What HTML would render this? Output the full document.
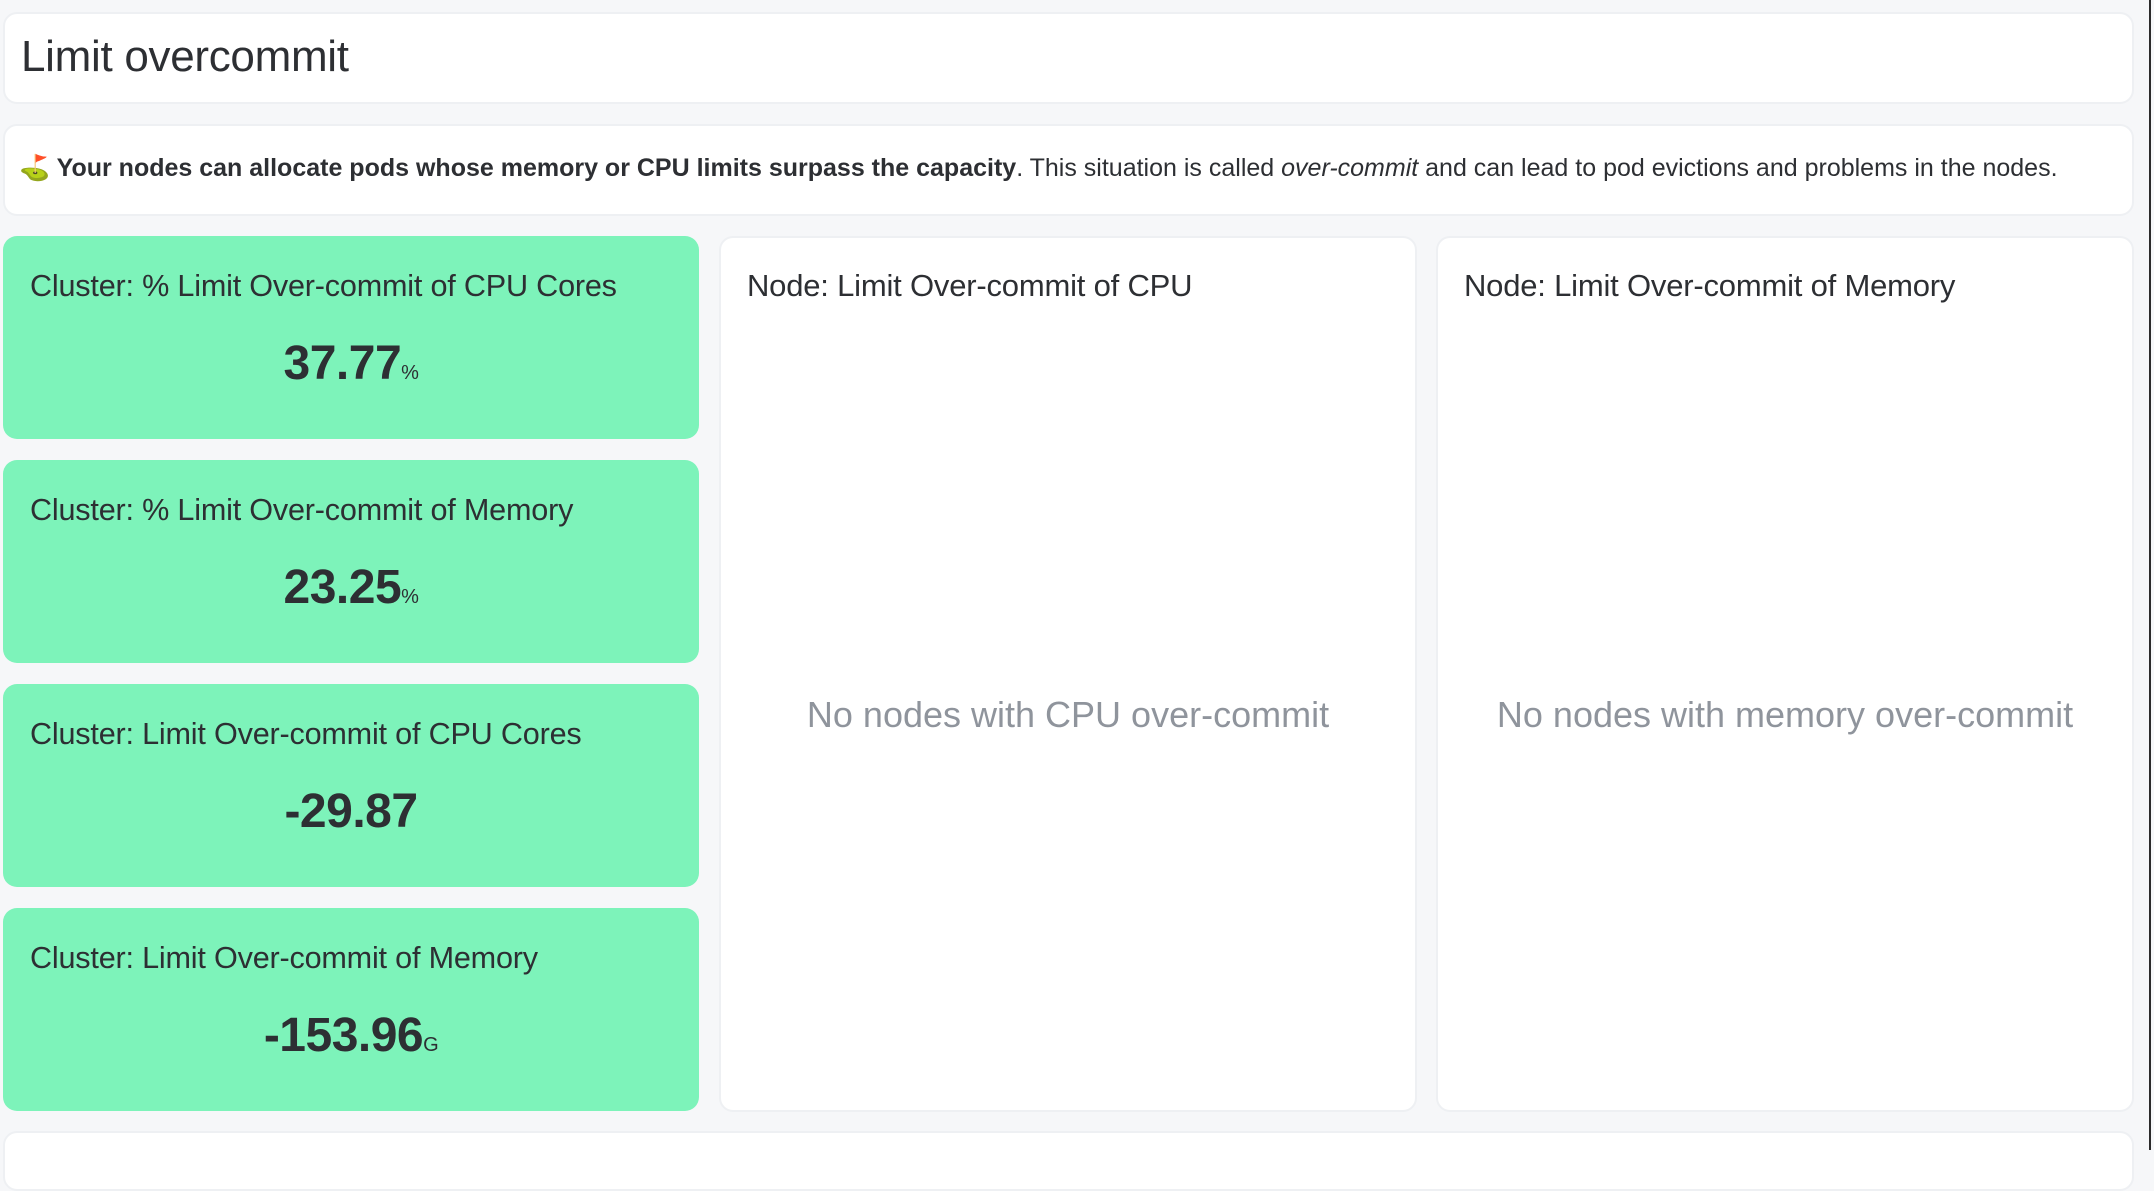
<!DOCTYPE html>
<html><head><meta charset="utf-8"><style>
body{margin:0;width:2154px;height:1150px;background:#f6f7f9;font-family:"Liberation Sans",sans-serif;color:#2d2f33;position:relative;overflow:hidden}
.box{position:absolute;background:#fff;border:2px solid #eef0f3;border-radius:14px;box-sizing:border-box}
.card{position:absolute;left:3px;width:696px;height:203px;background:#7df3ba;border-radius:14px}
.card .t{position:absolute;left:27px;top:33px;font-size:30.6px;white-space:nowrap;letter-spacing:-0.2px}
.card .v{position:absolute;left:0;right:0;top:100px;text-align:center;font-size:48px;font-weight:bold;letter-spacing:-0.5px}
.card .v small{font-size:20px;font-weight:normal}
.pt{position:absolute;left:26px;top:30px;font-size:31px;letter-spacing:-0.2px}
.nn{position:absolute;left:0;right:0;top:456px;text-align:center;font-size:36px;color:#8f949c}
</style></head><body>
<div class="box" style="left:3px;top:12px;width:2131px;height:92px"><div style="position:absolute;left:16px;top:18px;font-size:44px;letter-spacing:-0.3px">Limit overcommit</div></div>
<div class="box" style="left:3px;top:124px;width:2131px;height:92px"><div style="position:absolute;left:14px;top:28px;font-size:25px;white-space:nowrap">⛳<b> Your nodes can allocate pods whose memory or CPU limits surpass the capacity</b>. This situation is called <i>over-commit</i> and can lead to pod evictions and problems in the nodes.</div></div>
<div class="card" style="top:236px"><div class="t">Cluster: % Limit Over-commit of CPU Cores</div><div class="v">37.77<small>%</small></div></div>
<div class="card" style="top:460px"><div class="t">Cluster: % Limit Over-commit of Memory</div><div class="v">23.25<small>%</small></div></div>
<div class="card" style="top:684px"><div class="t">Cluster: Limit Over-commit of CPU Cores</div><div class="v">-29.87</div></div>
<div class="card" style="top:908px"><div class="t">Cluster: Limit Over-commit of Memory</div><div class="v">-153.96<small>G</small></div></div>
<div class="box" style="left:719px;top:236px;width:698px;height:876px"><div class="pt">Node: Limit Over-commit of CPU</div><div class="nn">No nodes with CPU over-commit</div></div>
<div class="box" style="left:1436px;top:236px;width:698px;height:876px"><div class="pt">Node: Limit Over-commit of Memory</div><div class="nn">No nodes with memory over-commit</div></div>
<div class="box" style="left:3px;top:1131px;width:2131px;height:60px"></div>
<div style="position:absolute;left:2149px;top:0;width:2px;height:1150px;background:#2b2b2b"></div>
</body></html>
